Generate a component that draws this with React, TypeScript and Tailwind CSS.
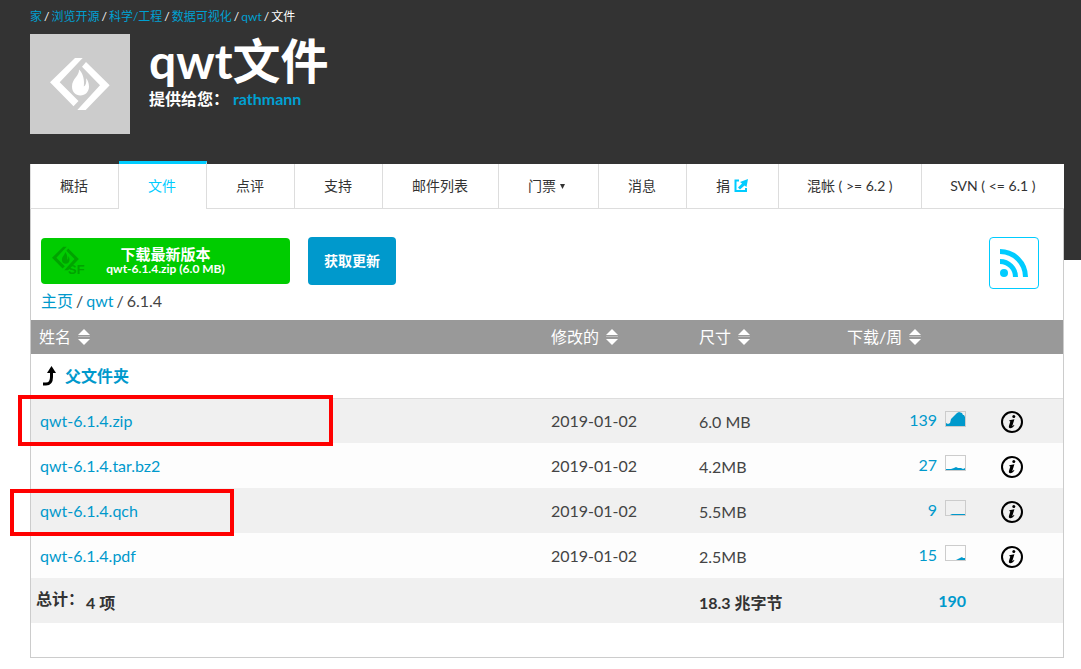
import React from 'react'
import { clsx } from 'clsx'

const CRUMBS = ['家', '浏览开源', '科学/工程', '数据可视化', 'qwt']

const TABS = [
  { label: '概括' },
  { label: '文件', active: true },
  { label: '点评' },
  { label: '支持' },
  { label: '邮件列表' },
  { label: '门票', menu: true },
  { label: '消息' },
  { label: '捐', external: true },
  { label: '混帐 ( >= 6.2 )', tight: true },
  { label: 'SVN ( <= 6.1 )', tight: true },
]

const FILES = [
  { name: 'qwt-6.1.4.zip', date: '2019-01-02', size: '6.0 MB', weekly: 139, chart: 'M1 15V12L3 13L5 12L6 8L8 6L10 4L12 2L14 1L17 2L18 4L19 4L20 6V15Z', mark: '-left-[13px] -top-1 w-[315px] h-[51px]' },
  { name: 'qwt-6.1.4.tar.bz2', date: '2019-01-02', size: '4.2MB', weekly: 27, chart: 'M1 15V14L6 14L9 13L11 12L13 13L16 13L18 14L20 13V15Z' },
  { name: 'qwt-6.1.4.qch', date: '2019-01-02', size: '5.5MB', weekly: 9, chart: 'M5 15L7 14H20V15Z', mark: '-left-[21px] top-px w-[224px] h-[47px]' },
  { name: 'qwt-6.1.4.pdf', date: '2019-01-02', size: '2.5MB', weekly: 15, chart: 'M11 15L13 14L15 13L17 12L18 13H20V15Z' },
]

const Mark = () => (
  <>
    <path d="M45 24H52.7L29.7 48.3L48.5 67L43.5 72.2L20 48.3Z" />
    <path d="M56 28L79.7 51.3L55.7 76H47.3L70 51.3L52 32.7Z" />
    <path d="M49 35.5C49.5 42 42 44.5 42 52.5C42 57.8 45.5 61.5 50.3 61.5C55.5 61.5 59 57.8 59 52.6C59 49 57.6 46 56.2 44.3C56.6 49 55.8 51.5 53.8 52.6C54.8 46 53 39 49 35.5Z" />
  </>
)

const SortIcon = () => (
  <svg width="12" height="16" viewBox="0 0 12 16" fill="#fff" aria-hidden="true">
    <path d="M6 0L12 6H0Z" />
    <path d="M0 7.5H12" stroke="#bbb" />
    <path d="M6 16L12 10H0Z" />
  </svg>
)

const ExternalIcon = () => (
  <svg width="14" height="14" viewBox="0 0 14 14" fill="none" aria-hidden="true">
    <path d="M5 1.5H1.5V12H12V9" stroke="#0cf" strokeWidth="2" />
    <path d="M14 0L12.5 8L10.5 6.5L6 10.5L4 8.5L8 4.5L6 3Z" fill="#0cf" />
  </svg>
)

const InfoIcon = () => (
  <svg width="22" height="22" viewBox="0 0 22 22" fill="none" aria-hidden="true">
    <circle cx="11" cy="11" r="10" stroke="#000" strokeWidth="2" />
    <circle cx="12.8" cy="5.6" r="1.5" fill="#000" />
    <path d="M8.4 9.2L13.4 8.2L11.4 14.7C11.2 15.5 11.8 15.4 12.8 13.8L13.4 14.3C12 16.5 10.8 17.2 9.4 17.2C7.9 17.2 7.6 16 8 14.8L9.3 10.4L8.3 10.1Z" fill="#000" />
  </svg>
)

const Sortable: React.FC<{ label: string }> = ({ label }) => (
  <th scope="col" className="px-2 text-left font-normal">
    <button className="flex items-center gap-[7px]">
      {label}
      <SortIcon />
    </button>
  </th>
)

const App: React.FC = () => (
  <div className="bg-white pb-3 text-base text-[#444] font-['Lato','Noto_Sans_CJK_SC',sans-serif]">
    <header className="bg-[#333] pl-[30px] pt-2 pb-[126px] text-white">
      <nav className="flex gap-0.5 text-xs leading-[18px]">
        {CRUMBS.map((crumb) => (
          <React.Fragment key={crumb}>
            <a href="#" className="text-[#00a0d2]">{crumb}</a>
            <span>/</span>
          </React.Fragment>
        ))}
        <span>文件</span>
      </nav>
      <div className="mt-2 flex gap-[19px]">
        <svg width="100" height="100" viewBox="0 0 100 100" className="bg-[#ccc]" fill="#fff" aria-hidden="true">
          <Mark />
        </svg>
        <div>
          <h1 className="text-[48px] leading-[53px] font-bold">qwt文件</h1>
          <p className="font-bold leading-6">
            提供给您： <a href="#" className="text-[#00a0d2]">rathmann</a>
          </p>
        </div>
      </div>
    </header>

    <main className="relative ml-[30px] mr-[17px] -mt-[99px]">
      <nav className="flex items-end text-sm leading-5">
        {TABS.map(({ label, active, menu, external, tight }) => (
          <a
            key={label}
            href="#"
            className={clsx(
              'flex items-center justify-center whitespace-nowrap border-r border-[#ddd] bg-white first:border-l last:grow last:border-r-0',
              tight ? 'px-7' : 'pl-[29px] pr-[30px]',
              active ? 'h-12 border-t-[3px] border-t-[#0cf] pb-px text-[#0cf]' : 'h-[45px] border-b text-[#333]',
              (menu || external) && 'gap-1',
            )}
          >
            {label}
            {menu && (
              <svg width="8" height="6" viewBox="0 0 8 6" fill="#333" aria-hidden="true">
                <path d="M0 1H5L2.5 6Z" />
              </svg>
            )}
            {external && <ExternalIcon />}
          </a>
        ))}
      </nav>

      <section className="border border-t-0 border-[#ccc] bg-white pb-[34px]">
        <div className="flex items-start justify-between pl-2.5 pr-6 pt-7">
          <div className="flex h-12 items-center gap-[18px]">
            <button className="grid h-[46px] w-[249px] grid-cols-[1fr_auto_1fr] items-center rounded bg-[#0c0] px-2.5 font-bold text-white">
              <svg width="34" height="30" viewBox="0 0 34 30" fill="#00a300" aria-hidden="true">
                <g transform="translate(-8 -10) scale(.45)">
                  <Mark />
                </g>
                <text x="17" y="28" fontSize="13" fontFamily="Liberation Sans, sans-serif">SF</text>
              </svg>
              <span className="flex flex-col text-center">
                <span className="text-[15px] leading-4">下载最新版本</span>
                <span className="text-xs leading-[14px]">qwt-6.1.4.zip (6.0 MB)</span>
              </span>
            </button>
            <button className="h-12 rounded bg-[#09c] px-4 text-sm font-bold text-white">获取更新</button>
          </div>
          <a href="#" aria-label="RSS" className="flex h-[52px] w-[50px] items-center justify-center rounded border border-[#0cf]">
            <svg width="28" height="28" viewBox="0 0 28 28" fill="none" stroke="#0cf" strokeWidth="5" aria-hidden="true">
              <circle cx="4" cy="24" r="4" fill="#0cf" stroke="none" />
              <path d="M0 12.5A15.5 15.5 0 0 1 15.5 28" />
              <path d="M0 2.5A25.5 25.5 0 0 1 25.5 28" />
            </svg>
          </a>
        </div>
        <nav className="flex gap-[3px] pb-[7px] pl-2.5 leading-6">
          <a href="#" className="text-[#09c]">主页</a>
          <span>/</span>
          <a href="#" className="text-[#09c]">qwt</a>
          <span>/</span>
          <span>6.1.4</span>
        </nav>

        <table className="w-full table-fixed border-separate border-spacing-0 leading-6">
          <colgroup>
            <col />
            <col className="w-[148px]" />
            <col className="w-[148px]" />
            <col className="w-[135px]" />
            <col className="w-[89px]" />
          </colgroup>
          <thead>
            <tr className="h-[34px] bg-[#999] text-white">
              <Sortable label="姓名" />
              <Sortable label="修改的" />
              <Sortable label="尺寸" />
              <Sortable label="下载/周" />
              <td />
            </tr>
          </thead>
          <tbody>
            <tr className="h-[45px]">
              <td colSpan={5} className="border-b border-[#ddd] pl-[11px]">
                <a href="#" className="flex items-center gap-2 font-bold text-[#09c]">
                  <svg width="15" height="20" viewBox="0 0 15 20" fill="none" aria-hidden="true">
                    <path d="M1 18H4C8.5 18 9.5 15 9.5 11V6" stroke="#000" strokeWidth="3" />
                    <path d="M9.5 0L14 7H5Z" fill="#000" />
                  </svg>
                  父文件夹
                </a>
              </td>
            </tr>
            {FILES.map((file) => (
              <tr key={file.name} className="h-[45px] nth-2:h-11 odd:bg-[#fdfdfd] even:bg-[#f0f0f0]">
                <td className="relative pl-[9px]">
                  <a href="#" className="text-[#09c]">{file.name}</a>
                  {file.mark && <span className={clsx('pointer-events-none absolute z-10 border-4 border-[#f00]', file.mark)} />}
                </td>
                <td className="px-2">{file.date}</td>
                <td className="px-2 pt-0.5">{file.size}</td>
                <td className="px-2 pb-0.5">
                  <a href="#" className="flex items-center justify-end gap-2 text-[#09c]">
                    {file.weekly}
                    <svg width="21" height="16" viewBox="0 0 21 16" className="mb-[3px]" aria-hidden="true">
                      <rect x=".5" y=".5" width="20" height="15" fill="none" stroke="#ccc" />
                      <path d={file.chart} fill="#09c" />
                    </svg>
                  </a>
                </td>
                <td className="pl-[27px] pt-0.5">
                  <button aria-label={file.name} className="block">
                    <InfoIcon />
                  </button>
                </td>
              </tr>
            ))}
          </tbody>
          <tfoot>
            <tr className="h-[45px] bg-[#f0f0f0] font-bold text-[#333]">
              <td className="pl-[5px]">
                <span className="flex gap-0.5">
                  总计：
                  <span className="pt-1">4 项</span>
                </span>
              </td>
              <td />
              <td className="px-2 pt-1">18.3 兆字节</td>
              <td className="px-2 text-right text-[#09c]">190</td>
              <td />
            </tr>
          </tfoot>
        </table>
      </section>
    </main>
  </div>
)

export default App
